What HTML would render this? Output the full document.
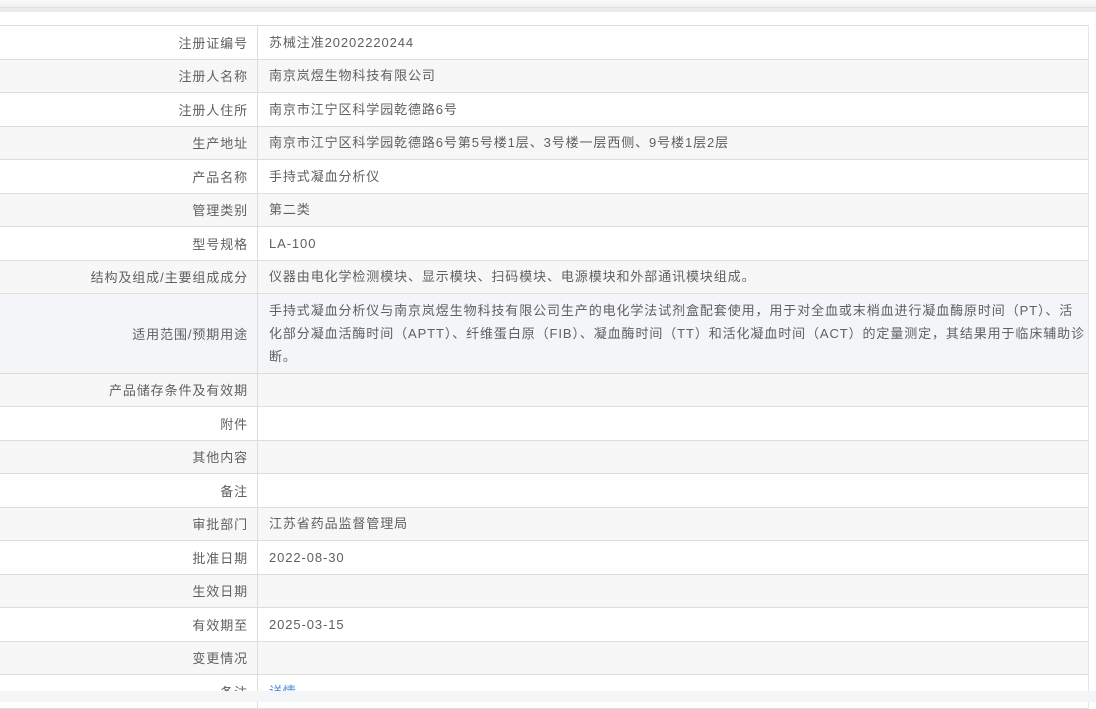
<!DOCTYPE html>
<html><head><meta charset="utf-8"><style>
*{margin:0;padding:0;box-sizing:border-box}
body{width:1096px;height:702px;overflow:hidden;background:#fff;font-family:"Liberation Sans","Noto Sans CJK SC",sans-serif;color:#606060;font-size:13px;letter-spacing:0.9px;position:relative}
.top1{position:absolute;left:0;top:0;width:1096px;height:7px;background:linear-gradient(#fafafa,#f0f0f0)}
.top2{position:absolute;left:0;top:7px;width:1096px;height:5px;background:#ebebeb;border-top:1px solid #e0e0e0}
.tbl{position:absolute;left:0;top:25px;width:1089px;border-top:1px solid #ddd;border-right:1px solid #e6e6e6}
.r{display:flex;border-bottom:1px solid #ddd;height:33.5px;align-items:center}
.r.g{background:#f7f7f7}
.r.h{background:#f3f5f9;height:79.5px}
.l{width:258px;text-align:right;padding-right:9px;border-right:1px solid #ddd;height:100%;display:flex;align-items:center;justify-content:flex-end}
.v{padding-left:11px;line-height:23px}
.bot{position:absolute;left:0;top:691px;width:1096px;height:11px;background:#f4f5f7}
a{color:#4a90d9;text-decoration:none}
</style></head><body>
<div class="top1"></div><div class="top2"></div>
<div class="tbl">
<div class="r"><div class="l">注册证编号</div><div class="v">苏械注准20202220244</div></div>
<div class="r g"><div class="l">注册人名称</div><div class="v">南京岚煜生物科技有限公司</div></div>
<div class="r"><div class="l">注册人住所</div><div class="v">南京市江宁区科学园乾德路6号</div></div>
<div class="r g"><div class="l">生产地址</div><div class="v">南京市江宁区科学园乾德路6号第5号楼1层、3号楼一层西侧、9号楼1层2层</div></div>
<div class="r"><div class="l">产品名称</div><div class="v">手持式凝血分析仪</div></div>
<div class="r g"><div class="l">管理类别</div><div class="v">第二类</div></div>
<div class="r"><div class="l">型号规格</div><div class="v">LA-100</div></div>
<div class="r g"><div class="l">结构及组成/主要组成成分</div><div class="v">仪器由电化学检测模块、显示模块、扫码模块、电源模块和外部通讯模块组成。</div></div>
<div class="r h"><div class="l">适用范围/预期用途</div><div class="v">手持式凝血分析仪与南京岚煜生物科技有限公司生产的电化学法试剂盒配套使用，用于对全血或末梢血进行凝血酶原时间（PT）、活<br>化部分凝血活酶时间（APTT）、纤维蛋白原（FIB）、凝血酶时间（TT）和活化凝血时间（ACT）的定量测定，其结果用于临床辅助诊<br>断。</div></div>
<div class="r g"><div class="l">产品储存条件及有效期</div><div class="v"></div></div>
<div class="r"><div class="l">附件</div><div class="v"></div></div>
<div class="r g"><div class="l">其他内容</div><div class="v"></div></div>
<div class="r"><div class="l">备注</div><div class="v"></div></div>
<div class="r g"><div class="l">审批部门</div><div class="v">江苏省药品监督管理局</div></div>
<div class="r"><div class="l">批准日期</div><div class="v">2022-08-30</div></div>
<div class="r g"><div class="l">生效日期</div><div class="v"></div></div>
<div class="r"><div class="l">有效期至</div><div class="v">2025-03-15</div></div>
<div class="r g"><div class="l">变更情况</div><div class="v"></div></div>
<div class="r"><div class="l">备注</div><div class="v"><a>详情</a></div></div>
</div>
<div class="bot"></div>
</body></html>
